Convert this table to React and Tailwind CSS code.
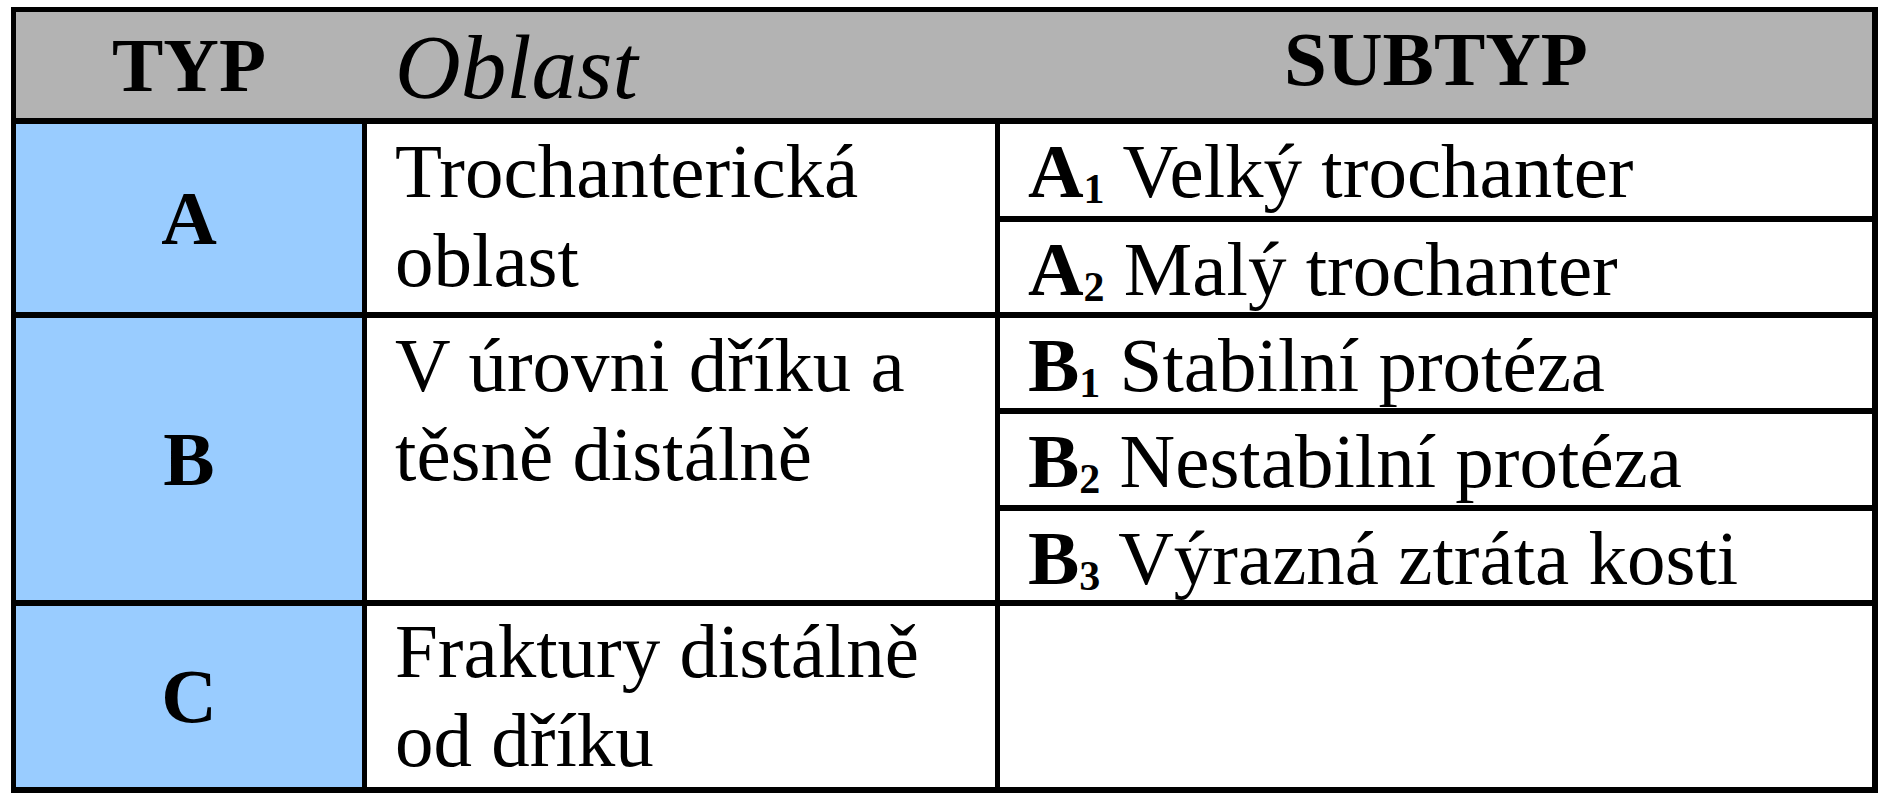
import React from "react";

const Sub = ({ children }) => (
  <span className="text-[42px] leading-none align-[-6px] font-bold">{children}</span>
);

const SubRow = ({ letter, num, text }) => (
  <div className="bg-white pl-[28px] pt-[3px] leading-[89px] text-[77px] whitespace-nowrap overflow-hidden">
    <span className="font-bold">{letter}</span>
    <Sub>{num}</Sub> {text}
  </div>
);

export default function App() {
  return (
    <div className="w-[1889px] h-[800px] bg-white pt-[7px] pl-[11px] font-['Liberation_Serif','Times_New_Roman',serif] text-black">
      <div className="grid w-[1867px] h-[786px] bg-black pt-[5px] pl-[5px] pr-[6px] pb-[6px] gap-x-[5px] gap-y-[6px] grid-cols-[346px_628px_872px] grid-rows-[106px_92px_90px_90px_91px_89px_181px]">
        {/* Header */}
        <div className="col-span-3 bg-[#b3b3b3] grid grid-cols-[346px_628px_872px] gap-x-[5px]">
          <div className="flex items-center justify-center text-[77px] leading-[89px] font-bold">TYP</div>
          <div className="flex items-center pl-[28px] pt-[4px] text-[91px] leading-[89px] italic">Oblast</div>
          <div className="flex items-center justify-center pb-[12px] text-[77px] leading-[89px] font-bold">SUBTYP</div>
        </div>

        {/* A */}
        <div className="row-span-2 bg-[#99ccff] flex items-center justify-center text-[77px] leading-[89px] font-bold">A</div>
        <div className="row-span-2 bg-white pl-[28px] pt-[3px] text-[77px] leading-[89px]">
          Trochanterická
          <br />
          oblast
        </div>
        <SubRow letter="A" num="1" text="Velký trochanter" />
        <SubRow letter="A" num="2" text="Malý trochanter" />

        {/* B */}
        <div className="row-span-3 bg-[#99ccff] flex items-center justify-center text-[77px] leading-[89px] font-bold">B</div>
        <div className="row-span-3 bg-white pl-[28px] pt-[3px] text-[77px] leading-[89px]">
          V úrovni dříku a
          <br />
          těsně distálně
        </div>
        <SubRow letter="B" num="1" text="Stabilní protéza" />
        <SubRow letter="B" num="2" text="Nestabilní protéza" />
        <SubRow letter="B" num="3" text="Výrazná ztráta kosti" />

        {/* C */}
        <div className="bg-[#99ccff] flex items-center justify-center text-[77px] leading-[89px] font-bold">C</div>
        <div className="bg-white pl-[28px] pt-[1px] text-[77px] leading-[89px]">
          Fraktury distálně
          <br />
          od dříku
        </div>
        <div className="bg-white" />
      </div>
    </div>
  );
}
